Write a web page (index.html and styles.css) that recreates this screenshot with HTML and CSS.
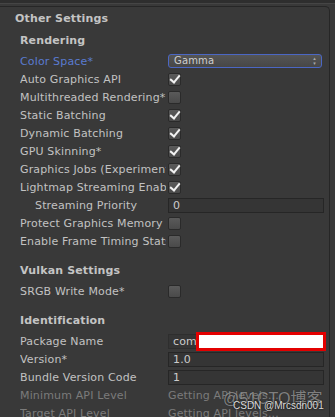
FILE: index.html
```html
<html lang="en">
  <head>
    <meta charset="UTF-8" />
    <meta name="viewport" content="width=device-width, initial-scale=1.0" />
    <title>Other Settings</title>
    <link rel="stylesheet" href="styles.css">
  </head>
  <body>
    <div class="topbar"></div>
    <div class="panel">
      <h1>Other Settings</h1>

      <h2>Rendering</h2>
      <div class="row">
        <span class="label blue">Color Space*</span>
        <div class="dropdown">Gamma<span class="arrows">&#9652;<br>&#9662;</span></div>
      </div>
      <div class="row"><span class="label">Auto Graphics API</span><span class="check on"></span></div>
      <div class="row"><span class="label">Multithreaded Rendering*</span><span class="check"></span></div>
      <div class="row"><span class="label">Static Batching</span><span class="check on"></span></div>
      <div class="row"><span class="label">Dynamic Batching</span><span class="check on"></span></div>
      <div class="row"><span class="label">GPU Skinning*</span><span class="check on"></span></div>
      <div class="row"><span class="label">Graphics Jobs (Experimental)</span><span class="check on"></span></div>
      <div class="row"><span class="label">Lightmap Streaming Enabled</span><span class="check on"></span></div>
      <div class="row"><span class="label indent">Streaming Priority</span><div class="field">0</div></div>
      <div class="row"><span class="label">Protect Graphics Memory</span><span class="check"></span></div>
      <div class="row"><span class="label">Enable Frame Timing Stats</span><span class="check"></span></div>

      <h2 class="gap">Vulkan Settings</h2>
      <div class="row"><span class="label">SRGB Write Mode*</span><span class="check"></span></div>

      <h2 class="gap">Identification</h2>
      <div class="row">
        <span class="label">Package Name</span>
        <div class="field package">com<span class="redact"></span></div>
      </div>
      <div class="row"><span class="label">Version*</span><div class="field">1.0</div></div>
      <div class="row"><span class="label">Bundle Version Code</span><div class="field">1</div></div>
      <div class="row dim"><span class="label">Minimum API Level</span><span>Getting API levels...</span></div>
      <div class="row dim"><span class="label">Target API Level</span><span>Getting API levels...</span></div>

      <div class="watermark">
        <span class="wm1">@51CTO博客</span>
        <span class="wm2">CSDN @Mrcsdn001</span>
      </div>
    </div>
  </body>
</html>
```

FILE: styles.css
```css
body {
  margin: 0;
  background: #393939;
  font-family: "DejaVu Sans", Verdana, "Noto Sans CJK SC", sans-serif;
  font-size: 11px;
  letter-spacing: 0.15px;
  color: #c2c2c2;
  overflow: hidden;
}

.topbar {
  height: 3px;
  background: #2e2e2e;
  border-bottom: 1px solid #454545;
}

.panel {
  position: relative;
  margin: 2px 5px 0 0;
  border-top: 1px solid #262626;
  border-right: 1px solid #262626;
  border-top-right-radius: 5px;
  padding: 4px 0 0 15px;
  height: 420px;
}

h1 {
  margin: 0 0 6px 0;
  font-size: 11px;
  font-weight: bold;
  color: #c4c4c4;
  line-height: 16px;
}

h2 {
  margin: 0 0 3px 5px;
  font-size: 11px;
  font-weight: bold;
  color: #c4c4c4;
  line-height: 16px;
}

h2.gap {
  margin-top: 13px;
}

.row {
  display: flex;
  align-items: center;
  height: 18px;
  padding-left: 5px;
}

.label {
  width: 146px;
  margin-right: 2px;
  flex: none;
  overflow: hidden;
  white-space: nowrap;
}

.label.indent {
  padding-left: 15px;
  width: 131px;
}

.blue {
  color: #5a7bd0;
}

.dropdown {
  width: 147px;
  height: 12px;
  line-height: 12px;
  padding-left: 5px;
  border: 1px solid #4b67c4;
  border-radius: 3px;
  background: linear-gradient(#555555, #474747);
  font-size: 10px;
  color: #cfcfcf;
  position: relative;
}

.arrows {
  position: absolute;
  right: 5px;
  top: 1px;
  font-size: 5px;
  line-height: 5px;
  color: #aaaaaa;
}

.check {
  width: 11px;
  height: 11px;
  border: 1px solid #2a2a2a;
  border-radius: 2px;
  background: linear-gradient(#5a5a5a, #4a4a4a);
  position: relative;
}

.check.on::after {
  content: "";
  position: absolute;
  left: 3px;
  top: -1px;
  width: 4px;
  height: 8px;
  border-right: 2px solid #f2f2f2;
  border-bottom: 2px solid #f2f2f2;
  transform: rotate(40deg);
}

.field {
  width: 150px;
  height: 13px;
  line-height: 13px;
  padding-left: 4px;
  background: #353535;
  border: 1px solid #262626;
  color: #cccccc;
  position: relative;
}

.field.package {
  border-color: #2e2e2e;
}

.redact {
  position: absolute;
  left: 27px;
  top: -3px;
  width: 124px;
  height: 13px;
  background: #ffffff;
  border: 3px solid #e30000;
}

.dim {
  color: #7b7b7b;
}

.watermark {
  position: absolute;
  left: 223px;
  top: 382px;
  width: 110px;
  font-family: "Liberation Sans", Arial, "Noto Sans CJK SC", sans-serif;
  letter-spacing: 0;
}

.wm1 {
  display: block;
  font-size: 16px;
  line-height: 20px;
  color: rgba(180, 180, 180, 0.65);
  text-shadow: 0 0 1px rgba(0, 0, 0, 0.4);
}

.wm2 {
  position: absolute;
  left: 10px;
  top: 11px;
  font-size: 10px;
  color: rgba(240, 240, 240, 0.9);
  text-shadow: 0 0 2px #000000;
  white-space: nowrap;
}
```
